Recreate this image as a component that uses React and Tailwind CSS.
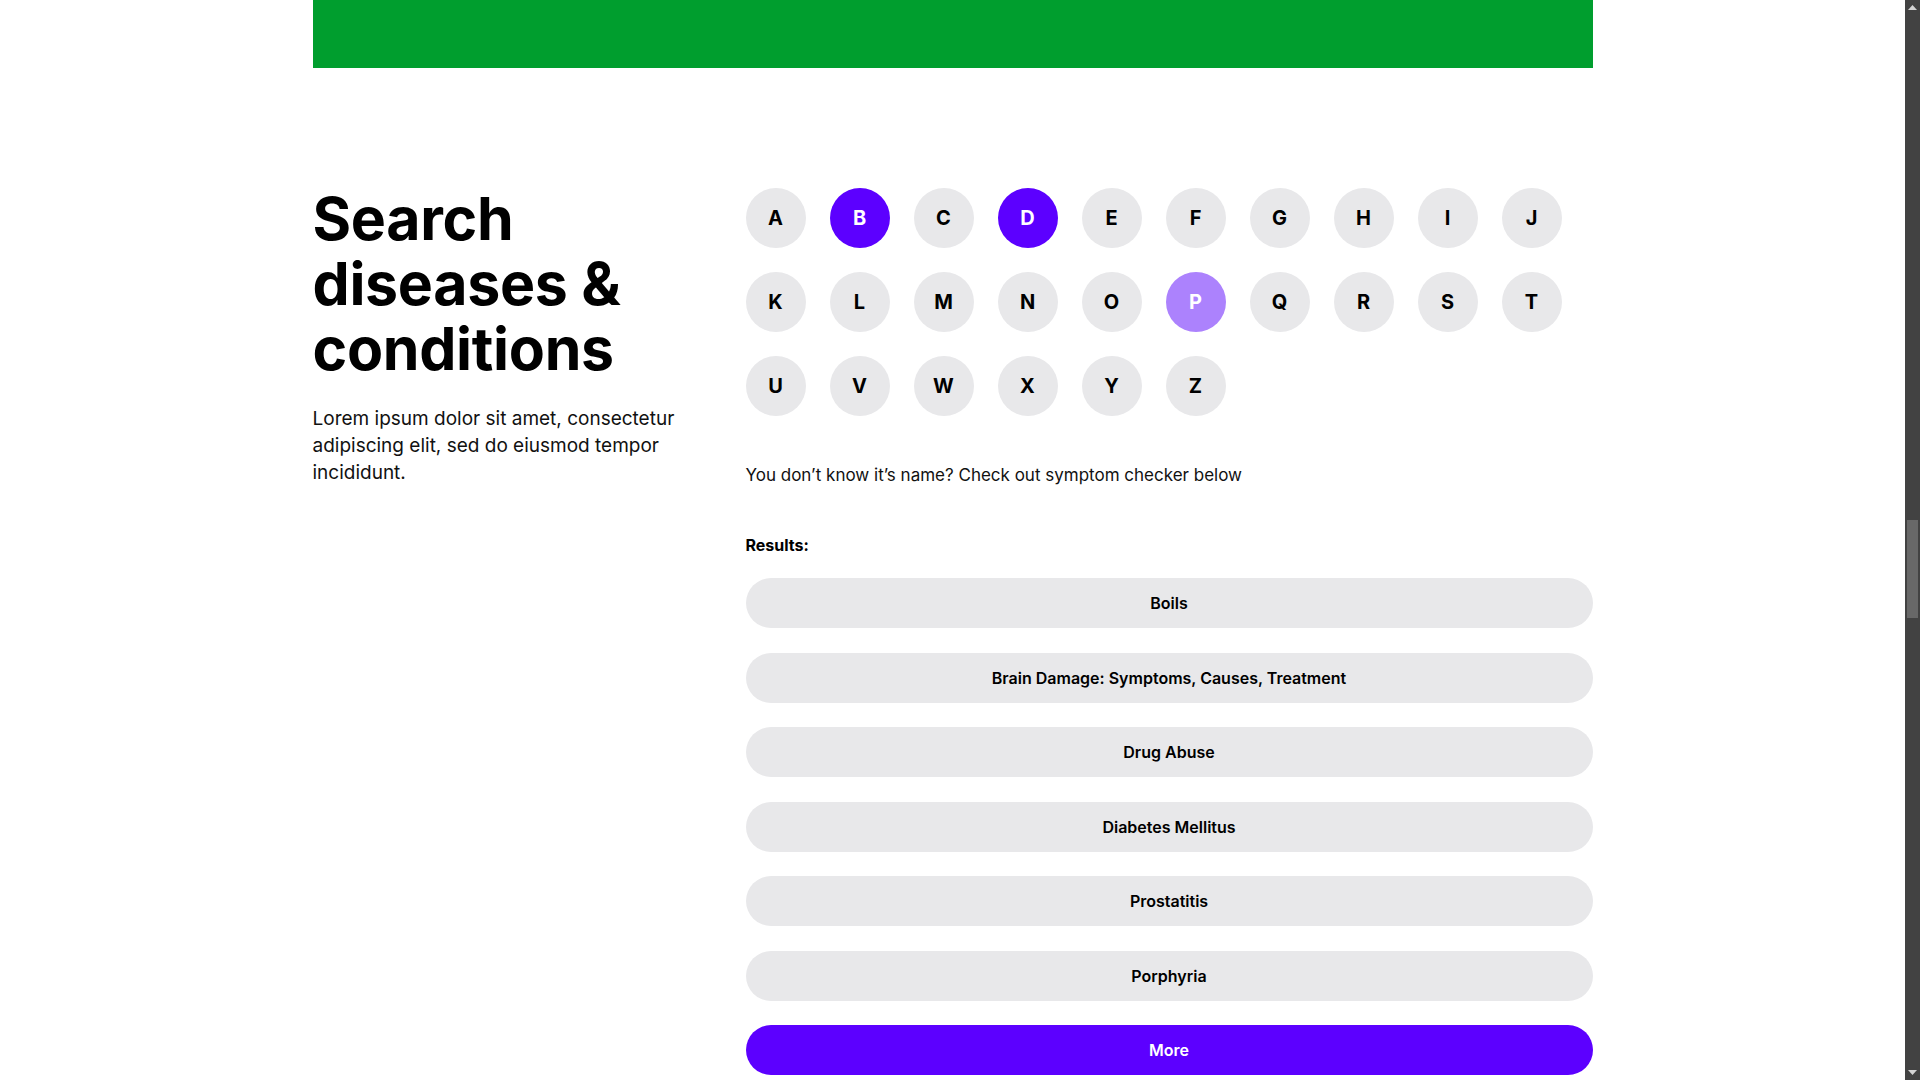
import React from 'react'

const letters = 'ABCDEFGHIJKLMNOPQRSTUVWXYZ'.split('')
const active = { B: 'dark', D: 'dark', P: 'light' }
const results = ['Boils', 'Brain Damage: Symptoms, Causes, Treatment', 'Drug Abuse', 'Diabetes Mellitus', 'Prostatitis', 'Porphyria']

function LetterButton ({ letter }) {
  const state = active[letter]
  let tone = 'bg-[#e8e8ea] text-black'
  if (state === 'dark') tone = 'bg-[#5c00ff] text-white'
  if (state === 'light') tone = 'bg-[#ac82fd] text-white'
  return (
    <button type="button" className={`flex h-[60px] w-[60px] items-center justify-center rounded-full text-[20px] font-bold ${tone}`}>
      {letter}
    </button>
  )
}

function Scrollbar () {
  return (
    <div className="flex h-screen w-[15px] shrink-0 flex-col bg-[#424242]">
      <div className="flex h-[15px] items-center justify-center">
        <svg width="9" height="5" viewBox="0 0 9 5"><path d="M0 5 L4.5 0 L9 5 Z" fill="#d4d4d4" /></svg>
      </div>
      <div className="flex-1 px-[2px]">
        <div className="mt-[505px] h-[98px] w-full bg-[#686868]" />
      </div>
      <div className="flex h-[15px] items-center justify-center">
        <svg width="9" height="5" viewBox="0 0 9 5"><path d="M0 0 L4.5 5 L9 0 Z" fill="#d4d4d4" /></svg>
      </div>
    </div>
  )
}

export default function App () {
  return (
    <div className="flex h-screen overflow-hidden bg-white" style={{ fontFamily: 'Inter, "Noto Sans", sans-serif' }}>
      <main className="flex-1">
        <div className="mx-auto w-[1280px]">
          <div className="h-[68px] bg-[#009e2e]" />
          <section className="flex pt-[116px]">
            <div className="w-[433px] shrink-0 pt-[2px]">
              <h1 className="max-w-[400px] text-[59px] font-bold leading-[65px] tracking-[-0.3px] text-black">
                Search diseases &amp; conditions
              </h1>
              <p className="mt-[24px] max-w-[390px] text-[19px] leading-[27px] text-[#111]">
                Lorem ipsum dolor sit amet, consectetur adipiscing elit, sed do eiusmod tempor incididunt.
              </p>
            </div>
            <div className="flex-1 pt-1">
              <div className="flex flex-wrap gap-6">
                {letters.map((l) => <LetterButton key={l} letter={l} />)}
              </div>
              <p className="mt-[46px] text-[17px] leading-[27px] text-[#111]">
                You don’t know it’s name? Check out symptom checker below
              </p>
              <h2 className="mt-[44px] text-[16px] font-bold leading-6 text-black">Results:</h2>
              <ul className="mt-[21px] flex flex-col gap-[24.5px]">
                {results.map((r) => (
                  <li key={r}>
                    <button type="button" className="flex h-[50px] w-full items-center justify-center rounded-full bg-[#e8e8ea] text-[16px] font-semibold text-black">
                      {r}
                    </button>
                  </li>
                ))}
                <li>
                  <button type="button" className="flex h-[50px] w-full items-center justify-center rounded-full bg-[#5c00ff] text-[16px] font-semibold text-white">
                    More
                  </button>
                </li>
              </ul>
            </div>
          </section>
        </div>
      </main>
      <Scrollbar />
    </div>
  )
}
